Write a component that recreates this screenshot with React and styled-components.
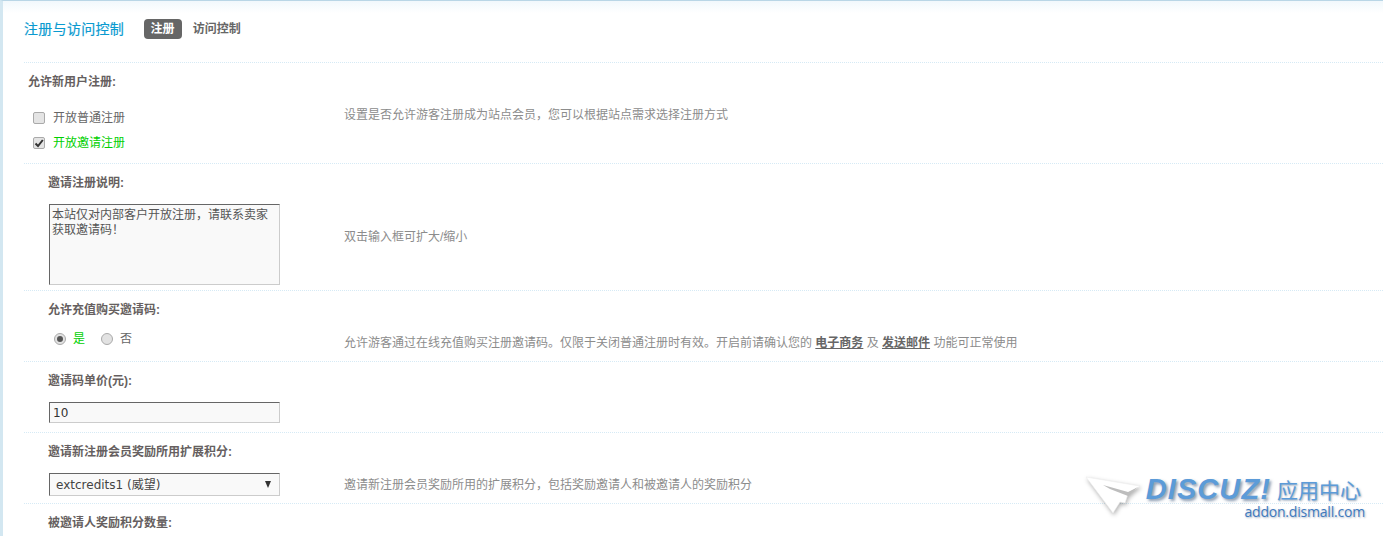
import React from "react";
import styled, { createGlobalStyle } from "styled-components";

const Global = createGlobalStyle`
  html, body { margin: 0; padding: 0; background: #fff; overflow: hidden; height: 536px; }
  body { font: 12px/16px "Liberation Sans", "Noto Sans CJK SC", sans-serif; color: #666; }
`;

const Page = styled.div`
  position: relative;
  height: 536px;
  overflow: hidden;
  box-sizing: border-box;
  border-left: 3px solid #d3e7f1;
  border-top: 1px solid #b9d6e6;
  padding-left: 21px;
  background: linear-gradient(#f1f8fc, #fff 12px);
`;

const Header = styled.header`
  height: 61px;
  display: flex;
  align-items: flex-start;
  padding-top: 18px;
  box-sizing: border-box;
`;

const Title = styled.h1`
  margin: 0 19.5px 0 0;
  font-size: 14px;
  line-height: 20px;
  font-weight: 400;
  letter-spacing: 0.3px;
  color: #0a9ad0;
  -webkit-text-stroke: 0.2px #0a9ad0;
`;

const Tab = styled.a`
  height: 20px;
  line-height: 20px;
  padding: 0 7px;
  border-radius: 4px;
  font-weight: 700;
  color: ${(p) => (p.$active ? "#fff" : "#666")};
  background: ${(p) => (p.$active ? "#666" : "transparent")};
  margin-right: 4px;
`;

const Row = styled.section`
  border-top: 1px dotted #d6eaf5;
  height: ${(p) => p.$h}px;
  box-sizing: border-box;
  padding-left: ${(p) => (p.$nested ? 24 : 4)}px;
  padding-top: 11px;
`;

const Label = styled.div`
  font-weight: 700;
  color: #665f60;
  line-height: 16px;
  height: 16px;
  margin-bottom: ${(p) => p.$gap}px;
`;

const Body = styled.div`
  display: grid;
  grid-template-columns: ${(p) => (p.$nested ? "296px" : "316px")} 1fr;
  align-items: start;
`;

const Field = styled.div`
  display: flex;
  flex-direction: column;
  gap: 9px;
`;

const Desc = styled.p`
  margin: ${(p) => p.$top}px 0 0;
  color: #8c8c8c;
  line-height: 16px;
`;

const Link = styled.a`
  font-weight: 700;
  color: #666;
  text-decoration: underline;
`;

const Option = styled.label`
  display: flex;
  align-items: center;
  height: 16px;
  color: ${(p) => (p.$on ? "#00d000" : "#666")};
`;

const Check = styled.span`
  width: 12px;
  height: 12px;
  box-sizing: border-box;
  margin: 0 8px 0 5px;
  border: 1px solid #aaa;
  border-radius: 2px;
  background: #e4e4e4;
  display: flex;
  align-items: center;
  justify-content: center;
`;

const RadioGroup = styled.div`
  display: flex;
  align-items: center;
  margin-left: 6px;
`;

const Radio = styled.span`
  width: 12px;
  height: 12px;
  box-sizing: border-box;
  border-radius: 50%;
  border: 1px solid #aaa;
  background: #e2e2e2;
  margin-right: 7px;
  display: flex;
  align-items: center;
  justify-content: center;
  &::after {
    content: "";
    display: ${(p) => (p.$on ? "block" : "none")};
    width: 6px;
    height: 6px;
    border-radius: 50%;
    background: #555;
  }
`;

const RadioText = styled.span`
  color: ${(p) => (p.$on ? "#00d000" : "#666")};
  margin-right: 16px;
`;

const inputBox = `
  display: block;
  width: 231px;
  box-sizing: border-box;
  margin-left: 1px;
  border-style: solid;
  border-width: 1px;
  border-color: #666 #ccc #ccc #666;
  background: #f9f9f9;
  color: #444;
`;

const TextArea = styled.div`
  ${inputBox}
  height: 81px;
  padding: 3px 2px;
  line-height: 15px;
  color: #555;
`;

const TextInput = styled.div`
  ${inputBox}
  height: 21px;
  padding: 0 3px;
  line-height: 20px;
  font-family: "DejaVu Sans", "Noto Sans CJK SC", sans-serif;
  font-size: 12px;
  color: #333;
`;

const Select = styled.div`
  ${inputBox}
  height: 23px;
  padding: 0 7px 0 6px;
  line-height: 22px;
  display: flex;
  justify-content: space-between;
  align-items: center;
  font-family: "DejaVu Sans", "Noto Sans CJK SC", sans-serif;
  font-size: 12px;
  color: #444;
`;

const Caret = styled.span`
  width: 0;
  height: 0;
  border-left: 3.5px solid transparent;
  border-right: 3.5px solid transparent;
  border-top: 7px solid #333;
  margin-right: 1px;
`;

const Watermark = styled.div`
  position: absolute;
  right: 18px;
  bottom: 15px;
  width: 279px;
  height: 45px;
  display: grid;
  grid-template-columns: 59px 1fr;
`;

const Plane = styled.svg`
  width: 56px;
  height: 44px;
  filter: drop-shadow(1px 2px 2px rgba(0, 0, 0, 0.3));
`;

const BrandCol = styled.div`
  display: flex;
  flex-direction: column;
  align-items: flex-end;
  white-space: nowrap;
`;

const BrandLine = styled.div`
  display: flex;
  align-items: center;
  height: 27px;
`;

const Brand = styled.span`
  font: italic 700 29px/27px "Liberation Sans", sans-serif;
  color: #5c9bd8;
  letter-spacing: 1.1px;
  text-shadow: 2px 2px 3px rgba(40, 70, 110, 0.55);
  margin-right: 6px;
`;

const BrandCn = styled.span`
  font: 400 21px/27px "Noto Sans CJK SC", sans-serif;
  color: #5c9bd8;
  text-shadow: 1px 1px 2px rgba(40, 70, 110, 0.5);
  margin-right: 4px;
`;

const Url = styled.span`
  font: 400 14px/18px "Open Sans", "Liberation Sans", sans-serif;
  letter-spacing: -0.2px;
  color: #3f79bd;
  text-shadow: 1px 1px 2px rgba(40, 70, 110, 0.4);
`;

const Tick = () => (
  <svg width="10" height="10" viewBox="0 0 10 10">
    <path d="M1.5 5.5 4 8 8.8 2" fill="none" stroke="#333" strokeWidth="2" />
  </svg>
);

export default function App() {
  return (
    <>
      <Global />
      <Page>
        <Header>
          <Title>注册与访问控制</Title>
          <Tab $active>注册</Tab>
          <Tab>访问控制</Tab>
        </Header>

        <Row $h={101}>
          <Label $gap={20}>允许新用户注册:</Label>
          <Body>
            <Field>
              <Option><Check />开放普通注册</Option>
              <Option $on><Check><Tick /></Check>开放邀请注册</Option>
            </Field>
            <Desc $top={-3}>设置是否允许游客注册成为站点会员，您可以根据站点需求选择注册方式</Desc>
          </Body>
        </Row>

        <Row $h={127} $nested>
          <Label $gap={13}>邀请注册说明:</Label>
          <Body $nested>
            <TextArea>本站仅对内部客户开放注册，请联系卖家获取邀请码！</TextArea>
            <Desc $top={25}>双击输入框可扩大/缩小</Desc>
          </Body>
        </Row>

        <Row $h={71} $nested>
          <Label $gap={13}>允许充值购买邀请码:</Label>
          <Body $nested>
            <RadioGroup>
              <Radio $on /><RadioText $on>是</RadioText>
              <Radio /><RadioText>否</RadioText>
            </RadioGroup>
            <Desc $top={4}>
              允许游客通过在线充值购买注册邀请码。仅限于关闭普通注册时有效。开启前请确认您的 <Link>电子商务</Link> 及 <Link>发送邮件</Link> 功能可正常使用
            </Desc>
          </Body>
        </Row>

        <Row $h={71} $nested>
          <Label $gap={13}>邀请码单价(元):</Label>
          <Body $nested>
            <TextInput>10</TextInput>
          </Body>
        </Row>

        <Row $h={71} $nested>
          <Label $gap={13}>邀请新注册会员奖励所用扩展积分:</Label>
          <Body $nested>
            <Select>extcredits1 (威望)<Caret /></Select>
            <Desc $top={4}>邀请新注册会员奖励所用的扩展积分，包括奖励邀请人和被邀请人的奖励积分</Desc>
          </Body>
        </Row>

        <Row $h={40} $nested>
          <Label $gap={13}>被邀请人奖励积分数量:</Label>
        </Row>

        <Watermark>
          <Plane viewBox="0 0 56 44">
            <path d="M0 1 54 10 42 18 39 27 34 26 27 37 Z" fill="#fff" stroke="#ececec" strokeWidth="0.6" />
            <path d="M17 9 42 16 52 11 42 20 24 13 Z" fill="#bdbdbd" />
          </Plane>
          <BrandCol>
            <BrandLine>
              <Brand>DISCUZ!</Brand>
              <BrandCn>应用中心</BrandCn>
            </BrandLine>
            <Url>addon.dismall.com</Url>
          </BrandCol>
        </Watermark>
      </Page>
    </>
  );
}
